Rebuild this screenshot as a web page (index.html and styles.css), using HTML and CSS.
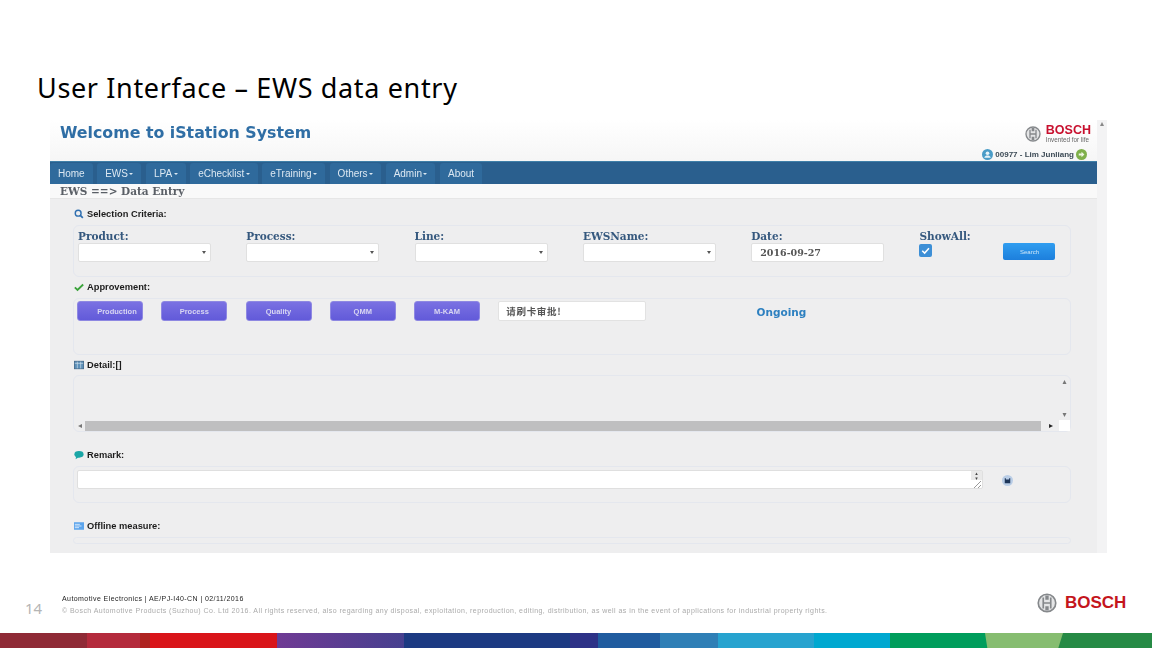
FILE: index.html
```html
<!DOCTYPE html>
<html lang="en">
<head>
<meta charset="UTF-8">
<meta name="viewport" content="width=device-width, initial-scale=1.0">
<link rel="stylesheet" href="styles.css">
<title>User Interface - EWS data entry</title>
</head>
<body>
<div class="slide">
  <h1 class="slide-title">User Interface – EWS data entry</h1>

  <div class="shot">
    <div class="app">
      <div class="app-header">
        <div class="welcome">Welcome to iStation System</div>
        <div class="brand">
          <div class="brand-row">
            <svg class="armature small" viewBox="0 0 24 24"><circle cx="12" cy="12" r="10.500"/><path d="M7.500 5.500v13M16.500 5.500v13M7.500 12h9M11 3v5M13 3v5M11 16v5M13 16v5"/></svg>
            <div>
              <div class="brand-name">BOSCH</div>
              <div class="brand-tag">Invented for life</div>
            </div>
          </div>
          <div class="user-row">
            <svg class="user-icon" viewBox="0 0 12 12"><circle cx="6" cy="6" r="6" fill="#4a9cc7"/><circle cx="6" cy="4.600" r="2" fill="#e8f3f8"/><path d="M2.400 9.600c.5-2 2-2.600 3.600-2.600s3.100.6 3.600 2.600z" fill="#e8f3f8"/></svg>
            <span>00977 - Lim Junliang</span>
            <svg class="user-icon" viewBox="0 0 12 12"><circle cx="6" cy="6" r="6" fill="#7fb04a"/><path d="M3 5h3V3l3.200 3L6 9V7H3z" fill="#eef5e2"/></svg>
          </div>
        </div>
      </div>

      <div class="nav">
        <a class="tab">Home</a>
        <a class="tab drop">EWS</a>
        <a class="tab drop">LPA</a>
        <a class="tab drop">eChecklist</a>
        <a class="tab drop">eTraining</a>
        <a class="tab drop">Others</a>
        <a class="tab drop">Admin</a>
        <a class="tab">About</a>
      </div>
      <div class="crumb">EWS ==&gt; Data Entry</div>

      <div class="content">
        <div class="sec-title first">
          <svg class="sec-icon" viewBox="0 0 12 12"><circle cx="5" cy="5" r="3.500" fill="none" stroke="#2f6fb0" stroke-width="1.700"/><path d="M7.600 7.600l3 3" stroke="#2f6fb0" stroke-width="2"/></svg>
          Selection Criteria:
        </div>
        <div class="panel criteria">
          <div class="field">
            <label>Product:</label>
            <div class="select"></div>
          </div>
          <div class="field">
            <label>Process:</label>
            <div class="select"></div>
          </div>
          <div class="field">
            <label>Line:</label>
            <div class="select"></div>
          </div>
          <div class="field">
            <label>EWSName:</label>
            <div class="select"></div>
          </div>
          <div class="field">
            <label>Date:</label>
            <div class="date">2016-09-27</div>
          </div>
          <div class="field">
            <label>ShowAll:</label>
            <div class="show-row">
              <span class="checkbox">
                <svg viewBox="0 0 12 12"><path d="M3 6.200l2.200 2.200L9.200 4" fill="none" stroke="#fff" stroke-width="1.400"/></svg>
              </span>
              <button class="search">Search</button>
            </div>
          </div>
        </div>

        <div class="sec-title">
          <svg class="sec-icon" viewBox="0 0 12 12"><path d="M1 6.500l3.200 3L11 3" fill="none" stroke="#3ba33b" stroke-width="2.200"/></svg>
          Approvement:
        </div>
        <div class="panel approve">
          <button class="approve-btn first-btn">Production</button>
          <button class="approve-btn">Process</button>
          <button class="approve-btn">Quality</button>
          <button class="approve-btn">QMM</button>
          <button class="approve-btn">M-KAM</button>
          <div class="card-input">请刷卡审批!</div>
          <div class="status">Ongoing</div>
        </div>

        <div class="sec-title detail-title">
          <svg class="sec-icon" viewBox="0 0 12 12"><rect x=".5" y="1.500" width="11" height="9" fill="#5b8fb8" stroke="#40688a"/><path d="M4 2v8M8 2v8M1 4h10" stroke="#cfe0ec" stroke-width=".8"/></svg>
          Detail:[]
        </div>
        <div class="panel detail">
          <div></div>
          <div class="vbar"><span>▴</span><span>▾</span></div>
          <div class="hbar"><span>◂</span><div class="thumb"></div><span class="dark">▸</span></div>
          <div class="corner"></div>
        </div>

        <div class="sec-title gap">
          <svg class="sec-icon" viewBox="0 0 12 12"><ellipse cx="6" cy="5.200" rx="5.500" ry="4" fill="#1aa6a6"/><path d="M2.500 7.500L2 11l4-2.500z" fill="#1aa6a6"/></svg>
          Remark:
        </div>
        <div class="panel remark">
          <div class="textarea">
            <div class="side">
              <div class="spin"><span>▴</span><span>▾</span></div>
              <svg class="grip" viewBox="0 0 11 8"><path d="M3 8l7-7M7 8l3-3" stroke="#999" fill="none"/></svg>
            </div>
          </div>
          <svg class="save" viewBox="0 0 12 12"><circle cx="6" cy="6" r="6" fill="#b9cde6"/><path d="M3 3.500h1.200v1.300h3.600V3.500H9V9H3z" fill="#1c3558"/></svg>
        </div>

        <div class="sec-title gap">
          <svg class="sec-icon" viewBox="0 0 12 12"><rect y="1.500" width="12" height="9" fill="#5ba4ec"/><path d="M1 4h6M1 6h8M1 8h5" stroke="#e6f1fc"/></svg>
          Offline measure:
        </div>
        <div class="panel offline"></div>
      </div>
    </div>
    <div class="page-bar"><span>▴</span></div>
  </div>

  <div class="footer">
    <div class="page-no">14</div>
    <div class="legal">
      <div class="legal-top">Automotive Electronics | AE/PJ-I40-CN | 02/11/2016</div>
      <div class="legal-bottom">© Bosch Automotive Products (Suzhou) Co. Ltd 2016. All rights reserved, also regarding any disposal, exploitation, reproduction, editing, distribution, as well as in the event of applications for industrial property rights.</div>
    </div>
    <div class="foot-logo">
      <svg class="armature" viewBox="0 0 24 24"><circle cx="12" cy="12" r="10.500"/><path d="M7.500 5.500v13M16.500 5.500v13M7.500 12h9M11 3v5M13 3v5M11 16v5M13 16v5"/></svg>
      <span>BOSCH</span>
    </div>
  </div>

  <div class="strip">
    <i class="s1"></i><i class="s2"></i><i class="s3"></i><i class="s4"></i><i class="s5"></i><i class="s6"></i><i class="s7"></i><i class="s8"></i><i class="s9"></i><i class="s10"></i><i class="s11"></i><i class="s12"></i><i class="s13"></i><i class="s14"></i>
  </div>
</div>
</body>
</html>
```

FILE: styles.css
```css
body {
  margin: 0;
  background-color: #ffffff;
  font-family: "Liberation Sans", Arial, sans-serif;
}

.slide {
  width: 1152px;
  height: 648px;
  display: flex;
  flex-direction: column;
  overflow: hidden;
}

.slide-title {
  margin: 69px 0 0 37px;
  height: 51px;
  font-family: "Noto Sans", sans-serif;
  font-size: 27px;
  line-height: 37px;
  font-weight: 400;
  letter-spacing: 0.65px;
  color: #000000;
}

/* the pasted screenshot */
.shot {
  margin-left: 50px;
  width: 1057px;
  height: 433px;
  display: flex;
  overflow: hidden;
  filter: blur(0.35px);
  flex: none;
}

.app {
  width: 1047px;
  display: flex;
  flex-direction: column;
  background-color: #eeeeef;
}

.page-bar {
  width: 10px;
  background-color: #f3f3f4;
  text-align: center;
  font-size: 8px;
  line-height: 8px;
  color: #888888;
}

.page-bar span {
  font-family: "DejaVu Sans", sans-serif;
}

.app-header {
  height: 41px;
  display: flex;
  justify-content: space-between;
  background: linear-gradient(#ffffff, #f6f6f6);
  flex: none;
}

.welcome {
  margin: 2px 0 0 10px;
  font-family: "DejaVu Sans", sans-serif;
  font-weight: bold;
  font-size: 15.800px;
  line-height: 22px;
  color: #2f6ea5;
}

.brand {
  width: 115px;
  padding-right: 6px;
  box-sizing: border-box;
  display: flex;
  flex-direction: column;
  align-items: flex-end;
}

.brand-row {
  display: flex;
  gap: 5px;
  align-items: center;
  height: 28px;
}

.brand-name {
  font-weight: bold;
  font-size: 12.500px;
  line-height: 12px;
  color: #c8102e;
}

.brand-tag {
  font-size: 6.300px;
  line-height: 8px;
  color: #666666;
}

.user-row {
  display: flex;
  align-items: center;
  gap: 2px;
  height: 13px;
  margin-right: 4px;
  font-size: 8px;
  font-weight: bold;
  color: #3c4a55;
}

.user-icon {
  width: 11px;
  height: 11px;
}

.armature {
  width: 20px;
  height: 20px;
  fill: #e4e5e6;
  stroke: #85888b;
  stroke-width: 2;
}

.armature.small {
  width: 16px;
  height: 16px;
}

.nav {
  height: 23px;
  padding-top: 1px;
  box-sizing: border-box;
  display: flex;
  gap: 4.500px;
  background-color: #2a5f8e;
  border-top: 1px solid #3f7fa8;
  flex: none;
}

.tab {
  padding: 0 8px;
  font-size: 10px;
  line-height: 21px;
  color: #dce8f2;
  background-color: #2f6a9c;
  border-radius: 3px 3px 0 0;
}

.tab.drop::after {
  content: "";
  display: inline-block;
  margin-left: 1.500px;
  vertical-align: 2px;
  border-top: 2.500px solid #dce8f2;
  border-left: 2.500px solid transparent;
  border-right: 2.500px solid transparent;
}

.crumb {
  height: 15px;
  padding-left: 10px;
  box-sizing: border-box;
  font-family: "DejaVu Serif", serif;
  font-weight: bold;
  font-size: 10.500px;
  line-height: 14px;
  color: #5a5f66;
  background-color: #f9f9f9;
  border-bottom: 1px solid #e6e6e6;
  flex: none;
}

.content {
  padding: 9px 26px 0 23px;
}

.sec-title {
  height: 12px;
  margin: 4px 0 5px 1px;
  display: flex;
  align-items: center;
  gap: 3px;
  font-size: 9.300px;
  font-weight: bold;
  color: #1c1c1c;
}

.sec-title.first {
  margin-top: 0;
}

.sec-title.detail-title {
  margin-bottom: 4px;
}

.sec-title.gap {
  margin-top: 17px;
}

.sec-icon {
  width: 10px;
  height: 10px;
}

.panel {
  box-sizing: border-box;
  border: 1px solid #e4e7ee;
  border-radius: 6px;
  background-color: #eeeeef;
}

.criteria {
  height: 52px;
  padding: 3px 0 0 4px;
  display: grid;
  grid-template-columns: repeat(6, 168.300px);
}

.field label {
  display: block;
  font-family: "DejaVu Serif", serif;
  font-weight: bold;
  font-size: 10.500px;
  line-height: 14px;
  color: #35587e;
}

.select, .date {
  width: 133px;
  height: 19px;
  box-sizing: border-box;
  background-color: #ffffff;
  border: 1px solid #e0e0e0;
  border-radius: 2px;
}

.select {
  position: relative;
}

.select::after {
  content: "";
  position: absolute;
  right: 4px;
  top: 7px;
  border-top: 3px solid #555555;
  border-left: 2px solid transparent;
  border-right: 2px solid transparent;
}

.date {
  padding-left: 8px;
  font-family: "DejaVu Serif", serif;
  font-size: 9.500px;
  font-weight: bold;
  line-height: 17px;
  color: #555555;
}

.show-row {
  display: flex;
  align-items: flex-start;
  gap: 71px;
}

.checkbox {
  width: 13px;
  height: 13px;
  margin-top: 1px;
  background-color: #3d8fd6;
  border-radius: 2px;
}

.checkbox svg {
  display: block;
}

.search {
  width: 52px;
  height: 17px;
  padding: 0;
  border: none;
  border-radius: 2px;
  background: linear-gradient(#2f9df0, #1d7fdc);
  font-family: inherit;
  font-size: 6px;
  color: #cfe6f8;
}

.approve {
  height: 57px;
  padding: 2px 0 0 3px;
  display: flex;
  align-items: flex-start;
  gap: 18.250px;
}

.approve-btn {
  width: 66px;
  height: 20px;
  padding: 0;
  border: 1px solid #8e88e2;
  border-radius: 3px;
  background: linear-gradient(#7a71e2, #625ad9);
  font-family: inherit;
  font-size: 7.500px;
  font-weight: bold;
  color: #d8d6f2;
}

.approve-btn.first-btn {
  padding-left: 14px;
}

.card-input {
  width: 148px;
  height: 20px;
  box-sizing: border-box;
  padding-left: 7px;
  background-color: #ffffff;
  border: 1px solid #e2e2e2;
  border-radius: 2px;
  font-family: "Noto Sans CJK SC", sans-serif;
  font-weight: bold;
  font-size: 9.500px;
  letter-spacing: 0.700px;
  line-height: 18px;
  color: #555555;
}

.status {
  margin: 4px 0 0 92px;
  font-family: "DejaVu Sans", sans-serif;
  font-weight: bold;
  font-size: 10.500px;
  line-height: 14px;
  color: #2d80c0;
}

.detail {
  height: 57px;
  display: grid;
  grid-template-columns: 1fr 11px;
  grid-template-rows: 1fr 11px;
}

.vbar {
  display: flex;
  flex-direction: column;
  justify-content: space-between;
  align-items: center;
  padding-top: 1px;
  font-family: "DejaVu Sans", sans-serif;
  font-size: 8px;
  line-height: 10px;
  color: #777777;
}

.hbar {
  display: flex;
  align-items: center;
  padding: 0 6px 0 4px;
  gap: 3px;
  font-family: "DejaVu Sans", sans-serif;
  font-size: 8px;
  color: #777777;
}

.hbar .dark {
  margin-left: 5px;
  color: #222222;
}

.thumb {
  flex: 1;
  height: 10px;
  background-color: #bfbfc0;
}

.corner {
  background-color: #ffffff;
}

.remark {
  height: 37px;
  padding: 3px 0 0 3px;
  display: flex;
  align-items: flex-start;
}

.textarea {
  width: 906px;
  height: 19px;
  box-sizing: border-box;
  background-color: #ffffff;
  border: 1px solid #dfdfdf;
  border-radius: 2px;
  display: flex;
  justify-content: flex-end;
}

.side {
  width: 11px;
  display: flex;
  flex-direction: column;
}

.spin {
  height: 9px;
  display: flex;
  flex-direction: column;
  align-items: center;
  background-color: #e9e9e9;
  font-family: "DejaVu Sans", sans-serif;
  font-size: 5px;
  line-height: 4.500px;
  color: #444444;
}

.grip {
  display: block;
  width: 11px;
  height: 8px;
}

.save {
  width: 11px;
  height: 11px;
  margin: 5px 0 0 19px;
}

.offline {
  height: 7px;
}

.footer {
  height: 30px;
  margin-top: 37px;
  display: flex;
  flex: none;
}

.page-no {
  width: 62px;
  padding: 8px 0 0 25px;
  box-sizing: border-box;
  font-family: "Noto Sans", sans-serif;
  font-size: 15px;
  line-height: 20px;
  color: #b5b5b5;
}

.legal {
  width: 790px;
  padding-top: 1px;
  filter: blur(0.2px);
}

.legal-top {
  margin-top: 2px;
  font-size: 7px;
  line-height: 12px;
  letter-spacing: 0.420px;
  color: #222222;
}

.legal-bottom {
  font-size: 7px;
  line-height: 12px;
  letter-spacing: 0.445px;
  white-space: nowrap;
  color: #aaaaaa;
}

.foot-logo {
  margin-left: 185px;
  display: flex;
  align-items: center;
  gap: 8px;
  height: 20px;
  margin-top: 3px;
  font-weight: bold;
  font-size: 17px;
  color: #c4151c;
}

.strip {
  margin-top: auto;
  height: 15px;
  display: flex;
  flex: none;
  background: linear-gradient(90deg, #009d5c 90%, #268a45 90%);
}

.strip i {
  display: block;
  height: 100%;
}

.s1 { width: 87px; background-color: #8f2a36; }
.s2 { width: 53px; background-color: #b42a3c; }
.s3 { width: 10px; background-color: #ae2320; }
.s4 { width: 127px; background-color: #d91419; }
.s5 { width: 127px; background: linear-gradient(90deg, #6f3a94, #47408f); }
.s6 { width: 166px; background-color: #1c3a82; }
.s7 { width: 28px; background-color: #2d3287; }
.s8 { width: 62px; background-color: #205c9f; }
.s9 { width: 58px; background-color: #2f7fb6; }
.s10 { width: 96px; background-color: #27a3cf; }
.s11 { width: 76px; background-color: #00a8d0; }
.s12 { width: 95px; background-color: #009d5c; }
.s13 { width: 78px; background-color: #86bd70; clip-path: polygon(0 0, 100% 0, 94% 100%, 3% 100%); }
.s14 { width: 89px; background-color: #268a45; }
```
